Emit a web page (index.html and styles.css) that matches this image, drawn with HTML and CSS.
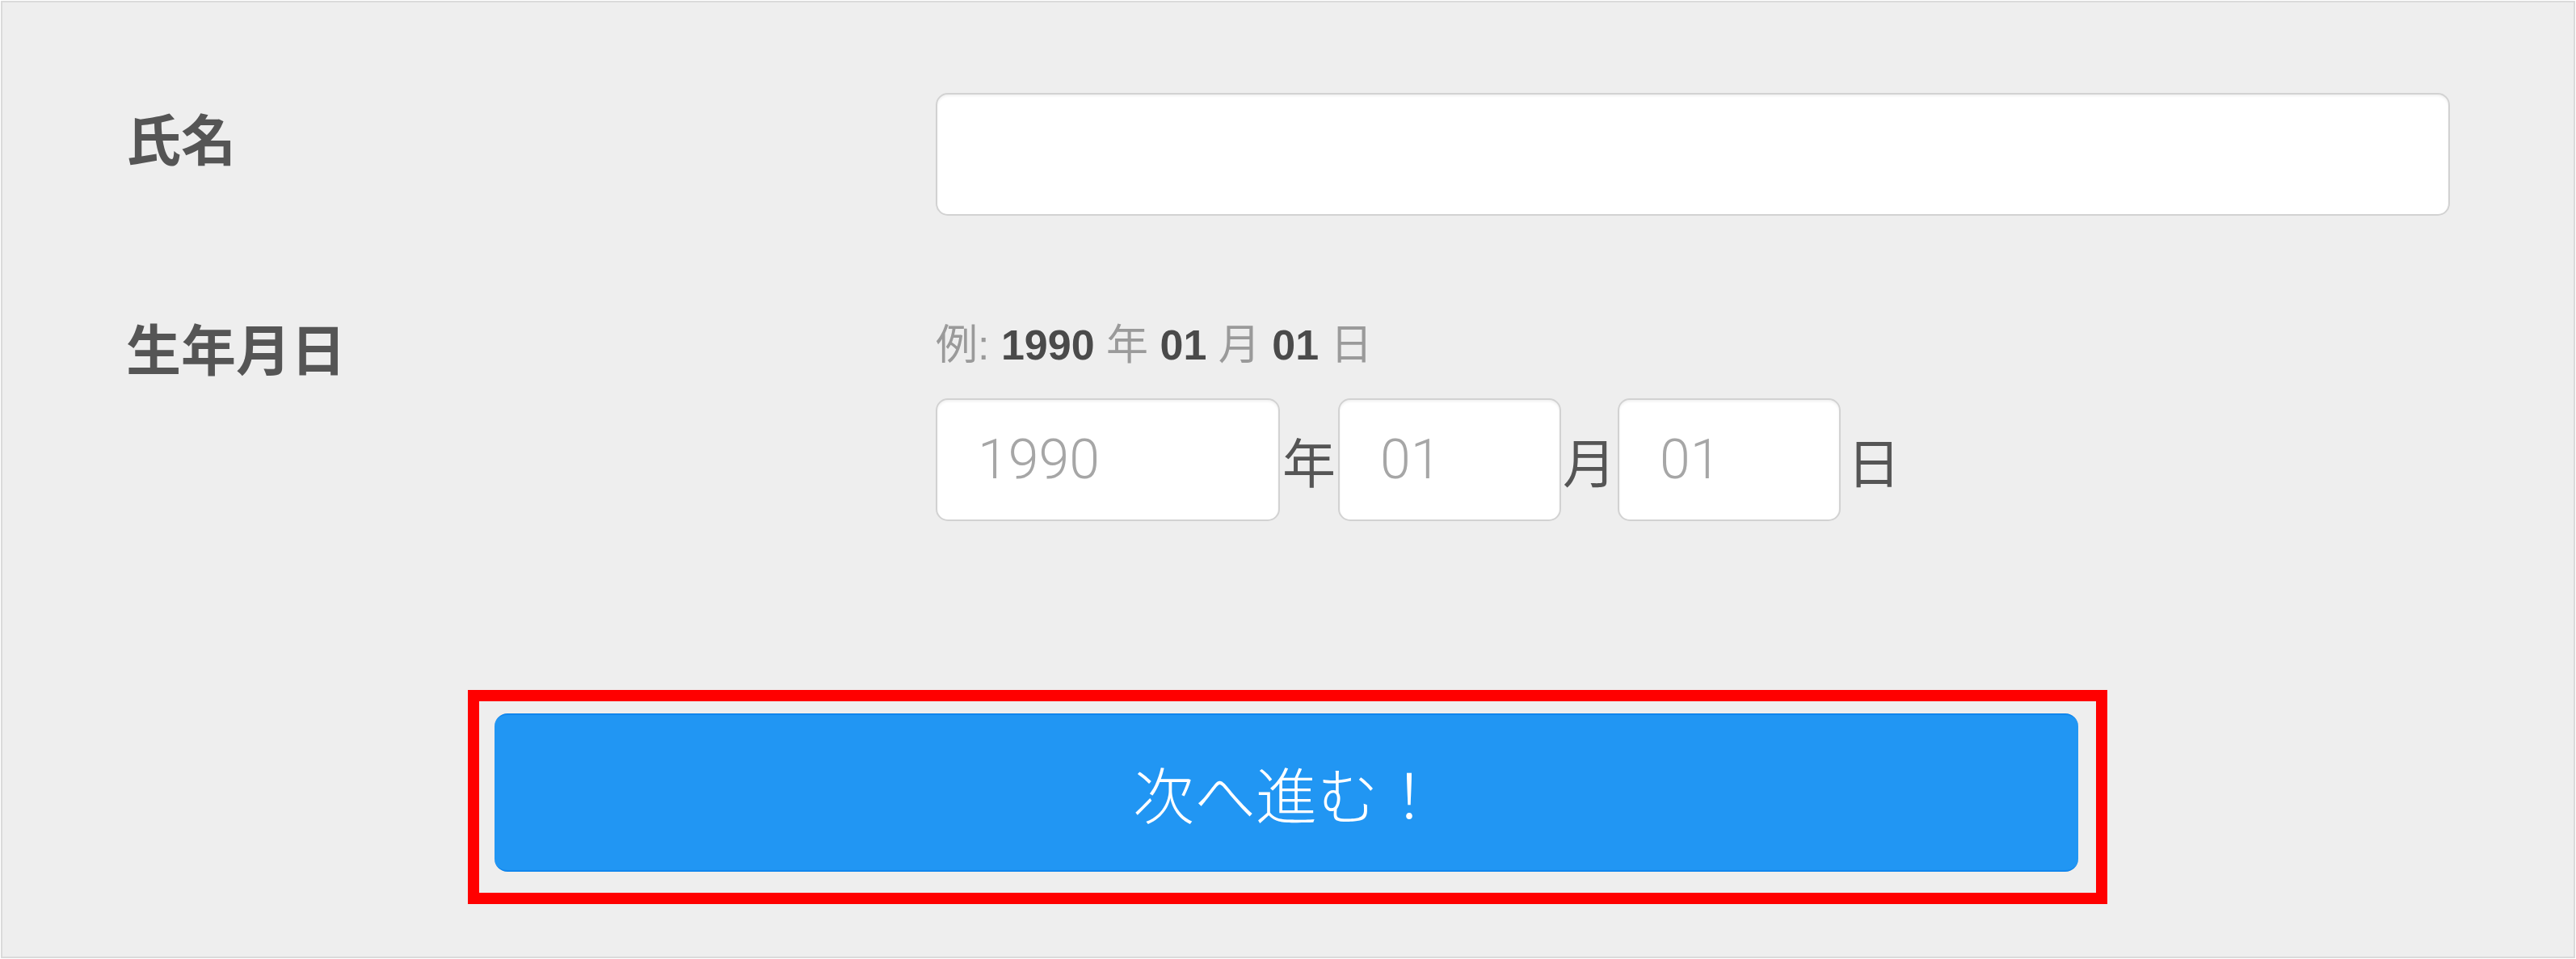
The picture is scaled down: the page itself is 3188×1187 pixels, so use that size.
FILE: index.html
```html
<!DOCTYPE html>
<html lang="ja">
<head>
<meta charset="utf-8">
<title>フォーム</title>
<link rel="stylesheet" href="styles.css">
</head>
<body>
<div class="frame">
  <form class="form">
    <div class="row row-name">
      <label class="label" for="name">氏名</label>
      <div class="field">
        <input class="input input-name" id="name" type="text">
      </div>
    </div>
    <div class="row row-birth">
      <div class="label">生年月日</div>
      <div class="field">
        <p class="hint"><span class="muted">例:</span> <b>1990</b> <span class="muted">年</span> <b>01</b> <span class="muted">月</span> <b>01</b> <span class="muted">日</span></p>
        <div class="date">
          <input class="input input-year" type="text" placeholder="1990">
          <span class="unit unit-year">年</span>
          <input class="input input-md" type="text" placeholder="01">
          <span class="unit unit-month">月</span>
          <input class="input input-md" type="text" placeholder="01">
          <span class="unit unit-day">日</span>
        </div>
      </div>
    </div>
    <div class="submit-area">
      <div class="highlight">
        <button class="btn" type="button">次へ進む！</button>
      </div>
    </div>
  </form>
</div>
</body>
</html>
```
FILE: styles.css
```css
html, body {
  margin: 0;
  padding: 0;
  background: #ffffff;
}

body {
  font-family: "Liberation Sans", "Noto Sans CJK JP", sans-serif;
  color: #555555;
}

.frame {
  box-sizing: border-box;
  margin: 1px;
  height: calc(100vh - 2px);
  border: 2px solid #dadada;
  background: #eeeeee;
  padding: 112px 153px 0 152px;
}

.form {
  margin: 0;
}

.row {
  display: grid;
  grid-template-columns: 1003px 1fr;
  align-items: start;
}

.row-birth {
  margin-top: 121px;
}

.label {
  font-family: "Noto Sans CJK JP", sans-serif;
  font-weight: 700;
  font-size: 68px;
  line-height: 68px;
  color: #555555;
  padding-left: 1px;
}

.row-name .label {
  margin-top: 21px;
}

.row-birth .label {
  margin-top: 8px;
}

.input {
  box-sizing: border-box;
  height: 152px;
  margin: 0;
  border: 2px solid #d2d2d2;
  border-radius: 15px;
  background: #ffffff;
  box-shadow: inset 0 2px 3px rgba(0, 0, 0, 0.06);
  padding: 0 50px;
  font-family: Roboto, "Liberation Sans", sans-serif;
  font-weight: 300;
  font-size: 68px;
  color: #555555;
  outline: none;
}

.input::placeholder {
  color: #a6a6a6;
}

.input-name {
  display: block;
  width: 100%;
}

.hint {
  margin: 0;
  font-size: 52px;
  line-height: 78px;
  white-space: nowrap;
}

.hint b {
  font-weight: 700;
  color: #4a4a4a;
}

.hint .muted {
  color: #9a9a9a;
}

.date {
  display: flex;
  align-items: center;
  margin-top: 27px;
}

.input-year {
  width: 426px;
}

.input-md {
  width: 276px;
}

.unit {
  font-family: "Noto Sans CJK JP", sans-serif;
  font-size: 66px;
  color: #555555;
  line-height: 1;
  text-align: center;
}

.unit-year {
  width: 72px;
}

.unit-month {
  width: 70px;
}

.unit-day {
  margin-left: 8px;
}

.submit-area {
  margin-top: 209px;
  display: flex;
  justify-content: center;
}

.highlight {
  box-sizing: border-box;
  width: 2029px;
  border: 14px solid #ff0000;
  padding: 15px 22px 26px 19px;
}

.btn {
  display: block;
  box-sizing: border-box;
  width: 100%;
  height: 196px;
  margin: 0;
  border: 0;
  border-top: 2px solid #1086ee;
  border-bottom: 2px solid #1086ee;
  border-radius: 16px;
  background: #2196f3;
  box-shadow: 0 -1px 0 #f6efe7, 0 1px 0 #f6efe7;
  color: #ffffff;
  font-family: "Noto Sans CJK JP", sans-serif;
  font-weight: 300;
  font-size: 76px;
  letter-spacing: 0;
  cursor: pointer;
}
```
